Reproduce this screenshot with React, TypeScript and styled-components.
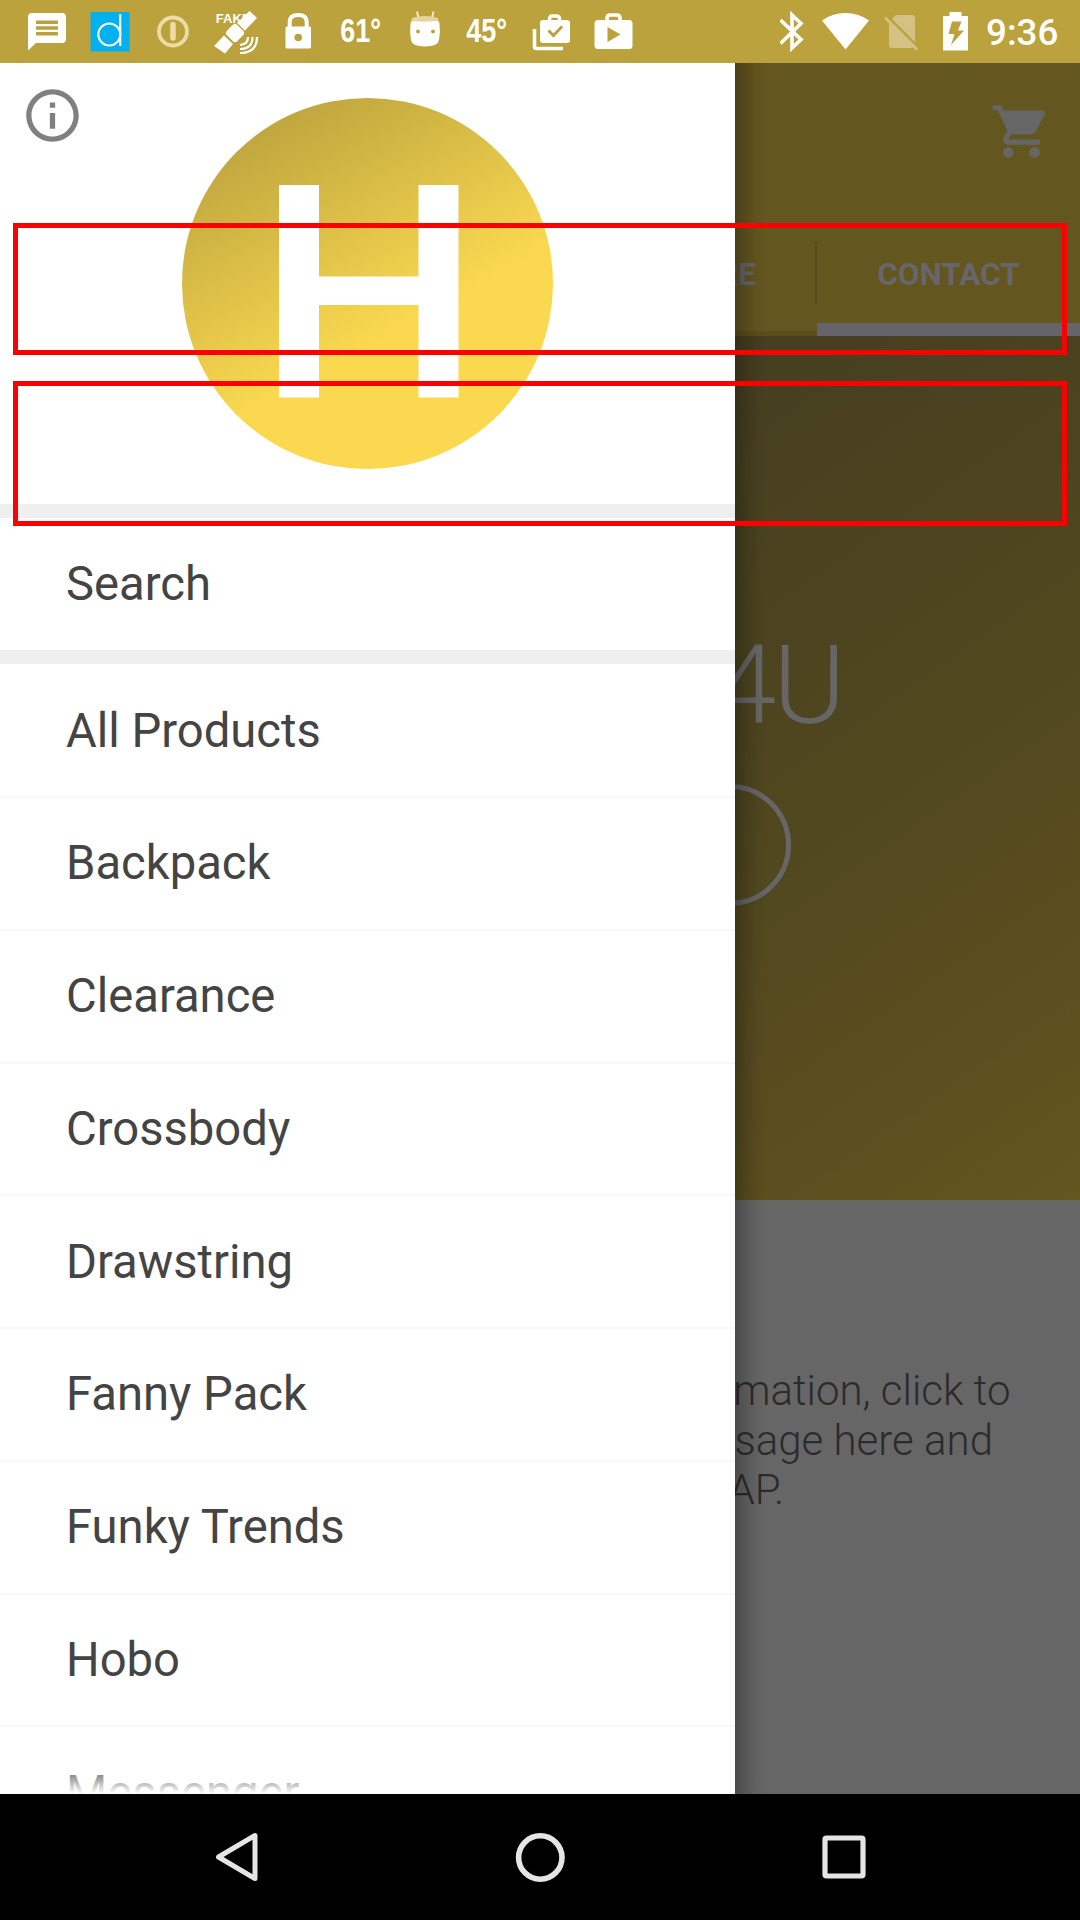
import React from "react";
import styled, { createGlobalStyle } from "styled-components";

const GlobalStyle = createGlobalStyle`
  *, *::before, *::after { box-sizing: border-box; }
  body { margin: 0; background: #000; }
`;

const Screen = styled.div`
  position: relative;
  display: flex;
  flex-direction: column;
  width: 1080px;
  height: 1920px;
  overflow: hidden;
  font-family: Roboto, "Noto Sans", sans-serif;
`;

/* ---------- status bar ---------- */

const StatusBar = styled.header`
  position: relative;
  z-index: 2;
  flex: none;
  display: flex;
  justify-content: space-between;
  height: 63px;
  padding: 0 21px 0 15.5px;
  background: #bba23d;
  color: #fff;
`;

const Notifications = styled.div`
  display: grid;
  grid-template-columns: repeat(10, 62.95px);
  align-items: center;
  justify-items: center;
  height: 63px;
`;

const SystemIcons = styled.div`
  display: flex;
  align-items: center;
  height: 63px;
`;

const Glyph = styled.svg<{ $w?: number; $h?: number; $gap?: number }>`
  display: block;
  flex: none;
  width: ${(p) => p.$w ?? 48}px;
  height: ${(p) => p.$h ?? 63}px;
  margin-right: ${(p) => p.$gap ?? 0}px;
`;

const Temperature = styled.span`
  margin-right: 2px;
  font: 700 32.5px/63px "Liberation Sans", Arial, sans-serif;
  transform: scaleX(0.83);
  white-space: nowrap;
`;

const FakeLabel = styled.text`
  font: 700 13px "Liberation Sans", Arial, sans-serif;
  fill: #fff;
`;

const Clock = styled.span`
  width: 73px;
  font-size: 36.75px;
  font-weight: 500;
  line-height: 66px;
  padding-top: 2px;
  white-space: nowrap;
`;

/* ---------- body ---------- */

const Body = styled.main`
  flex: none;
  display: grid;
  grid-template-columns: 735px 345px;
  height: 1731px;
`;

const Drawer = styled.aside`
  position: relative;
  z-index: 1;
  height: 1731px;
  background: #fff;

  &::before {
    content: "";
    position: absolute;
    left: 100%;
    top: 0;
    bottom: 0;
    width: 32px;
    background: linear-gradient(
      90deg,
      rgba(0, 0, 0, 0.27),
      rgba(0, 0, 0, 0.14) 35%,
      rgba(0, 0, 0, 0.04) 70%,
      rgba(0, 0, 0, 0)
    );
  }

  &::after {
    content: "";
    position: absolute;
    left: 0;
    right: 0;
    bottom: 0;
    height: 31px;
    background: linear-gradient(rgba(255, 255, 255, 0), #fff);
  }
`;

const DrawerHeader = styled.div`
  display: flex;
  height: 441px;
  padding: 21px 0 0 21px;
`;

const Logo = styled.div`
  display: flex;
  align-items: flex-start;
  width: 371px;
  height: 371px;
  margin: 14px 0 0 98px;
  border-radius: 50%;
  background: linear-gradient(151deg, #bba23d 9%, #fad950 61%);
`;

const Divider = styled.div`
  height: 14px;
  background: #efefef;
`;

const Menu = styled.nav`
  height: 1130px;
  padding-top: 1px;
  overflow: hidden;
`;

const MenuItem = styled.div<{ $plain?: boolean }>`
  display: flex;
  align-items: center;
  height: ${(p) => (p.$plain ? 132.3 : 132.75)}px;
  padding-left: 66px;
  border-bottom: ${(p) => (p.$plain ? "none" : "2px solid #f8f8f8")};
  color: #444;
  font-size: 47.2px;
  line-height: 56px;
  white-space: nowrap;
`;

/* ---------- dimmed page ---------- */

const Page = styled.section`
  display: flex;
  flex-direction: column;
  height: 1731px;
  background: #666;
`;

const Toolbar = styled.div`
  display: flex;
  justify-content: flex-end;
  height: 137px;
  padding: 37px 27px 0 0;
  background: #64561f;
`;

const Tabs = styled.div`
  display: grid;
  grid-template-columns: 82px 263px;
  height: 136px;
  background: #64561f;
  color: #66666c;
  font-size: 31.5px;
  font-weight: 700;
  line-height: 37px;
`;

const Tab = styled.div<{ $active?: boolean }>`
  display: flex;
  justify-content: ${(p) => (p.$active ? "center" : "flex-end")};
  padding-top: 55.5px;
  padding-right: ${(p) => (p.$active ? 0 : 26)}px;
  border-bottom: ${(p) => (p.$active ? "13px solid #656468" : "5px solid #5b4e1d")};
`;

const TabRule = styled.i`
  flex: none;
  width: 2px;
  height: 62px;
  margin: -14px -26px 0 59px;
  background: #584b1b;
`;

const Banner = styled.div`
  display: flex;
  flex-direction: column;
  align-items: flex-end;
  height: 864px;
  padding-top: 285px;
  background: linear-gradient(145deg, #453e20 0%, #50471f 45%, #5a4d1f 75%, #64561f 100%);
`;

const Title = styled.div`
  padding-right: 238px;
  color: #666;
  font-size: 110.25px;
  font-weight: 300;
  letter-spacing: -3.5px;
  line-height: 129px;
  white-space: nowrap;
`;

const Ring = styled.div`
  flex: none;
  width: 122px;
  height: 122px;
  margin: 34px 289px 0 0;
  border: 5px solid #666;
  border-radius: 50%;
`;

const Message = styled.div`
  padding-top: 166px;
  color: #2b2b2b;
  font-size: 42px;
  font-weight: 300;
  line-height: 49.5px;
`;

const MessageLine = styled.div<{ $end: number }>`
  display: flex;
  justify-content: flex-end;
  padding-right: ${(p) => p.$end}px;
  white-space: nowrap;
`;

/* ---------- highlight frames ---------- */

const Frame = styled.div<{ $top: number; $height: number }>`
  position: absolute;
  z-index: 3;
  left: 13px;
  top: ${(p) => p.$top}px;
  width: 1054px;
  height: ${(p) => p.$height}px;
  border: 5px solid #f90202;
`;

/* ---------- navigation bar ---------- */

const NavBar = styled.footer`
  position: relative;
  z-index: 2;
  flex: none;
  display: grid;
  grid-template-columns: repeat(3, 303.5px);
  justify-content: center;
  justify-items: center;
  align-items: center;
  height: 126px;
  background: #000;
`;

const categories = [
  "All Products",
  "Backpack",
  "Clearance",
  "Crossbody",
  "Drawstring",
  "Fanny Pack",
  "Funky Trends",
  "Hobo",
  "Messenger",
];

const GOLD = "#bba23d";

function NotificationIcons() {
  return (
    <Notifications>
      <Glyph viewBox="0 0 48 63">
        <path fill="#fff" d="M9 13h30q4 0 4 4v22q0 4-4 4H13l-8 7.500V17q0-4 4-4z" />
        <path stroke={GOLD} strokeWidth="3.600" d="M13 22.300h22M13 28h22M13 33.700h22" />
      </Glyph>
      <Glyph viewBox="0 0 48 63">
        <rect x="4.500" y="12" width="39" height="39.500" fill="#04b0ee" />
        <circle cx="23.300" cy="34.500" r="11" fill="none" stroke="#fff" strokeWidth="2" />
        <path d="M34.200 14v32" stroke="#fff" strokeWidth="2.200" />
      </Glyph>
      <Glyph viewBox="0 0 48 63">
        <circle cx="24" cy="31.500" r="14" fill="none" stroke="#ecdca6" strokeWidth="3.800" />
        <path d="M24 24.500v13.500" stroke="#ecdca6" strokeWidth="5.500" strokeLinecap="round" />
      </Glyph>
      <Glyph viewBox="0 0 48 63">
        <FakeLabel x="3.800" y="23">FAKE</FakeLabel>
        <g fill="#fff">
          <path d="M37.500 11l7.500 7-13 13.500-8-7.500z" />
          <path d="M12 35.500l9 8.500-8 9.500-11-7.500z" />
          <rect
            x="-8"
            y="-8"
            width="16"
            height="16"
            rx="4"
            stroke={GOLD}
            strokeWidth="1.300"
            transform="translate(23 33) rotate(45)"
          />
        </g>
        <g fill="none" stroke="#fff" strokeWidth="2.200">
          <path d="M36 37q0 7.500-8 8" />
          <path d="M40.500 37q0 12-12.500 12" />
          <path d="M45 37q0 16-17 16" />
        </g>
      </Glyph>
      <Glyph viewBox="0 0 48 63">
        <path d="M14.700 28v-6q0-7 8.500-7t8.500 7v6" fill="none" stroke="#fff" strokeWidth="4" />
        <rect x="10.500" y="26.500" width="25.500" height="22" rx="1.500" fill="#fff" />
        <circle cx="23.200" cy="37.500" r="3.800" fill={GOLD} />
      </Glyph>
      <Temperature>61°</Temperature>
      <Glyph viewBox="0 0 48 63">
        <path d="M16 11.500l2 9M32.500 11.500l-2 9" stroke="#f4ead0" strokeWidth="2" />
        <path d="M11 18q13-4 26 0l1 6H10z" fill="#e5d3a0" />
        <path d="M9.500 24q0-3 3-3 11.500 1.500 23 0 3 0 3 3 1 8-.5 16-1 6.500-14 6.500T10 40q-1.500-8-.5-16z" fill="#fff" />
        <circle cx="17" cy="31.500" r="1.900" fill={GOLD} />
        <circle cx="32" cy="31.500" r="1.900" fill={GOLD} />
      </Glyph>
      <Temperature>45°</Temperature>
      <Glyph viewBox="0 0 48 63">
        <path d="M8.500 29v17.500q0 2 2 2h26.500" fill="none" stroke="#fff" strokeWidth="3.600" />
        <path d="M23.500 21v-2q0-3 3-3h4q3 0 3 3v2" fill="none" stroke="#fff" strokeWidth="3.400" />
        <rect x="14" y="20" width="30" height="23" rx="3" fill="#fff" />
        <path d="M22.500 30.500l5 5 8.500-9" fill="none" stroke={GOLD} strokeWidth="3" />
      </Glyph>
      <Glyph viewBox="0 0 48 63">
        <path d="M18 21v-2.500q0-3.500 3-3.500h7q3 0 3 3.500V21" fill="none" stroke="#fff" strokeWidth="3.600" />
        <rect x="5.500" y="20" width="38" height="29" rx="3.500" fill="#fff" />
        <path d="M18.500 27l13 7.500L18.500 42z" fill={GOLD} />
      </Glyph>
    </Notifications>
  );
}

function SystemTray() {
  return (
    <SystemIcons>
      <Glyph viewBox="0 0 24 63" $w={24} $gap={18.500}>
        <path d="M.5 20l20.500 19.500-9 8.500V15l9 8.500L.5 43.500" fill="none" stroke="#fff" strokeWidth="3.600" />
      </Glyph>
      <Glyph viewBox="0 0 47 63" $w={47} $gap={15}>
        <path d="M0 20.500q10-7.500 23.500-7.500T47 20.500L23.500 49.500z" fill="#fff" />
      </Glyph>
      <Glyph viewBox="0 0 35 63" $w={35} $gap={24}>
        <path d="M12 15h16q3 0 3 3v27q0 3-3 3H8q-3 0-3-3V22z" fill="#d3c284" />
        <path d="M3 16l32 32" stroke={GOLD} strokeWidth="3" />
        <path d="M1 17.500l32 32" stroke="#d3c284" strokeWidth="2.800" />
      </Glyph>
      <Glyph viewBox="0 0 25 63" $w={25} $gap={18}>
        <path d="M0 16h6.500v-4h12v4H25v34.500H0z" fill="#fff" />
        <path d="M9 21.500h9.500L15 30.500h6L8 45l3.500-11H5.500z" fill={GOLD} />
      </Glyph>
      <Clock>9:36</Clock>
    </SystemIcons>
  );
}

export default function App() {
  return (
    <>
      <GlobalStyle />
      <Screen>
        <StatusBar>
          <NotificationIcons />
          <SystemTray />
        </StatusBar>

        <Body>
          <Drawer>
            <DrawerHeader>
              <Glyph viewBox="0 0 24 24" $w={63} $h={63} fill="#808080">
                <path d="M11 17h2v-6h-2v6zm1-15C6.480 2 2 6.480 2 12s4.480 10 10 10 10-4.480 10-10S17.520 2 12 2zm0 18c-4.410 0-8-3.590-8-8s3.590-8 8-8 8 3.590 8 8-3.590 8-8 8zM11 9h2V7h-2v2z" />
              </Glyph>
              <Logo>
                <Glyph viewBox="0 0 371 371" $w={371} $h={371} fill="#fff" role="img" aria-label="H">
                  <rect x="97" y="87" width="40" height="212.500" />
                  <rect x="236.500" y="87" width="40" height="212.500" />
                  <rect x="136" y="178.500" width="102" height="28.500" />
                </Glyph>
              </Logo>
            </DrawerHeader>
            <Divider />
            <MenuItem $plain>Search</MenuItem>
            <Divider />
            <Menu>
              {categories.map((name) => (
                <MenuItem key={name}>{name}</MenuItem>
              ))}
            </Menu>
          </Drawer>

          <Page>
            <Toolbar>
              <Glyph viewBox="0 0 24 24" $w={63} $h={63} fill="#666">
                <path d="M7 18c-1.100 0-1.990.9-1.990 2S5.900 22 7 22s2-.9 2-2-.9-2-2-2zM1 2v2h2l3.600 7.590-1.350 2.450c-.16.28-.25.61-.25.960 0 1.100.9 2 2 2h12v-2H7.420c-.14 0-.25-.11-.25-.25l.03-.12.900-1.630h7.450c.75 0 1.410-.41 1.750-1.030l3.580-6.490c.08-.14.12-.31.12-.48 0-.55-.45-1-1-1H5.210l-.94-2H1zm16 16c-1.100 0-1.990.9-1.990 2s.89 2 1.990 2 2-.9 2-2-.9-2-2-2z" />
              </Glyph>
            </Toolbar>
            <Tabs>
              <Tab>
                RE
                <TabRule />
              </Tab>
              <Tab $active>CONTACT</Tab>
            </Tabs>
            <Banner>
              <Title>4U</Title>
              <Ring />
            </Banner>
            <Message>
              <MessageLine $end={69.5}>mation, click to</MessageLine>
              <MessageLine $end={87}>sage here and</MessageLine>
              <MessageLine $end={296}>AP.</MessageLine>
            </Message>
          </Page>
        </Body>

        <NavBar>
          <Glyph viewBox="0 0 48 52" $w={48} $h={52}>
            <path d="M42 4.500v43L5.500 26z" fill="none" stroke="#e5e5e5" strokeWidth="5" strokeLinejoin="round" />
          </Glyph>
          <Glyph viewBox="0 0 50 50" $w={50} $h={50}>
            <circle cx="25.300" cy="25.500" r="21.700" fill="none" stroke="#e5e5e5" strokeWidth="5.600" />
          </Glyph>
          <Glyph viewBox="0 0 44 44" $w={44} $h={44}>
            <rect x="3" y="3" width="38" height="38" rx="1.500" fill="none" stroke="#e5e5e5" strokeWidth="5.200" />
          </Glyph>
        </NavBar>

        <Frame $top={223} $height={132} />
        <Frame $top={381} $height={145} />
      </Screen>
    </>
  );
}
